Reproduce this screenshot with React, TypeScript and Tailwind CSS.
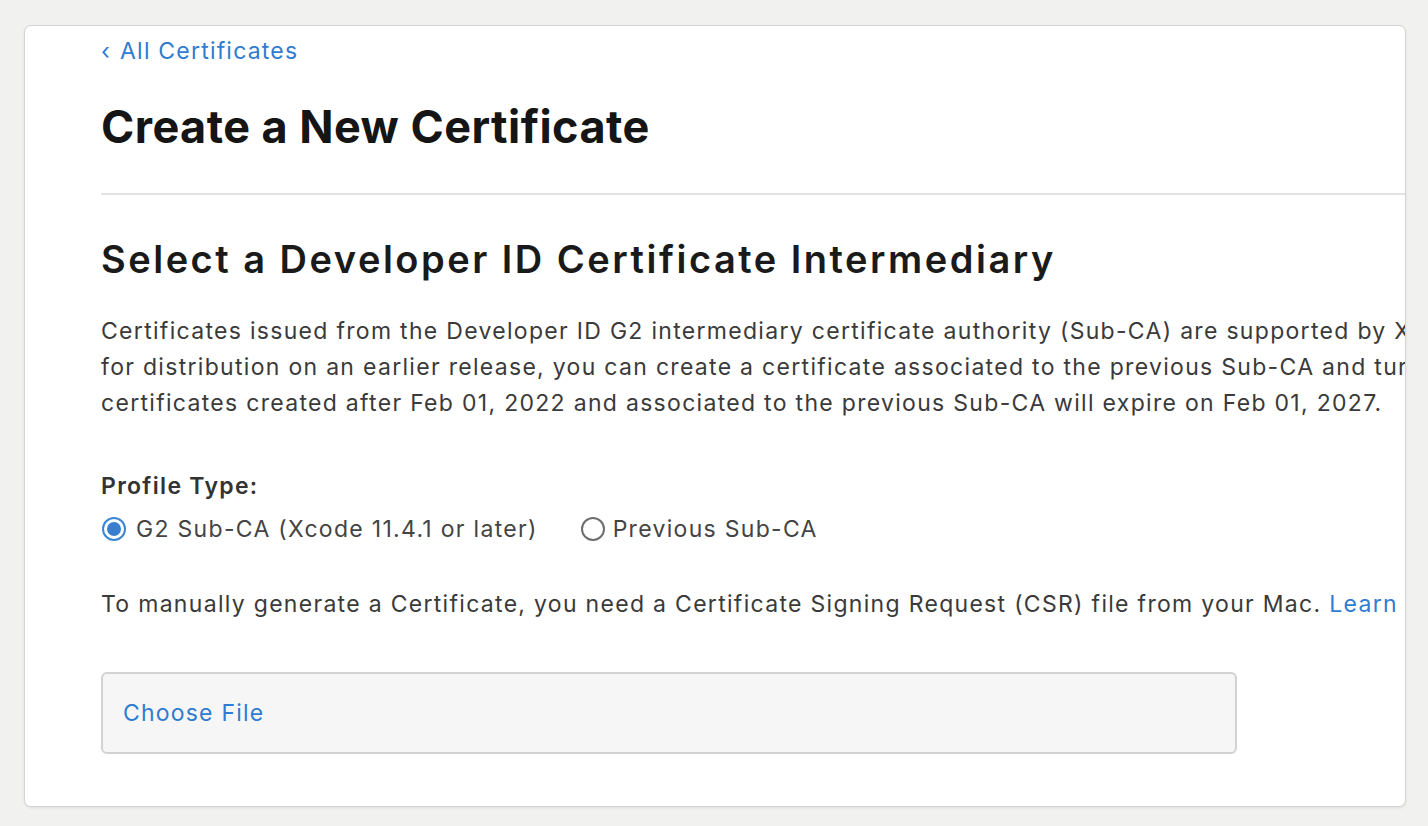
import React from "react";

export default function App() {
  return (
    <div
      className="w-[1428px] h-[826px] overflow-hidden bg-[#f1f1f0] pt-[25px] pl-[24px]"
      style={{ fontFamily: "Inter, 'Noto Sans', sans-serif" }}
    >
      <div className="w-[1382px] h-[782px] bg-white border border-[#d3d3d3] rounded-[7px] overflow-hidden shadow-[0_1px_3px_rgba(0,0,0,0.08)] pl-[76px] pt-[9px]">
        <a className="flex items-center h-[32px] text-[23px] tracking-[1.2px] text-[#2f7cd0] whitespace-nowrap">
          <span className="mr-[9px] leading-none">‹</span>
          <span>All Certificates</span>
        </a>
        <h1 className="mt-[32px] h-[56px] leading-[56px] text-[45px] font-bold text-[#151515] tracking-[0.45px] whitespace-nowrap">
          Create a New Certificate
        </h1>
        <div className="mt-[38px] h-[2px] bg-[#e3e3e3] mr-[-20px]" />
        <h2 className="mt-[42px] h-[44px] leading-[44px] text-[38px] font-semibold text-[#1a1a1a] tracking-[2.5px] whitespace-nowrap">
          Select a Developer ID Certificate Intermediary
        </h2>
        <div className="mt-[32px] text-[23px] tracking-[1.3px] leading-[36px] text-[#3a3a3a] whitespace-nowrap">
          <div>
            Certificates issued from the Developer ID G2 intermediary certificate authority (Sub-CA) are supported by Xcode 11.4.1 or later. If you need to sign apps
          </div>
          <div>
            for distribution on an earlier release, you can create a certificate associated to the previous Sub-CA and turn off the notarization. Developer ID
          </div>
          <div>
            certificates created after Feb 01, 2022 and associated to the previous Sub-CA will expire on Feb 01, 2027.
          </div>
        </div>
        <div className="mt-[49px] h-[32px] leading-[32px] text-[23px] tracking-[1.3px] font-semibold text-[#333]">
          Profile Type:
        </div>
        <div className="mt-[11px] h-[32px] flex items-center text-[23px] tracking-[1.3px] text-[#444] whitespace-nowrap">
          <span className="w-[24px] h-[24px] rounded-full border-[2px] border-[#3a87d6] flex items-center justify-center ml-[1px] mr-[10px] bg-white">
            <span className="w-[14px] h-[14px] rounded-full bg-[#3a7fcf]" />
          </span>
          <span>G2 Sub-CA (Xcode 11.4.1 or later)</span>
          <span className="w-[24px] h-[24px] rounded-full border-[2px] border-[#6e6e6e] ml-[43px] mr-[8px]" />
          <span>Previous Sub-CA</span>
        </div>
        <div className="mt-[43px] h-[32px] leading-[32px] text-[23px] tracking-[1.3px] text-[#3a3a3a] whitespace-nowrap">
          To manually generate a Certificate, you need a Certificate Signing Request (CSR) file from your Mac.{" "}
          <span className="text-[#2f7cd0]">Learn more</span>
        </div>
        <div className="mt-[52px] w-[1136px] h-[82px] bg-[#f6f6f6] border-[2px] border-[#d2d2d2] rounded-[6px] flex items-center pl-[20px]">
          <span className="text-[23px] tracking-[1.2px] text-[#2f7cd0]">Choose File</span>
        </div>
      </div>
    </div>
  );
}
